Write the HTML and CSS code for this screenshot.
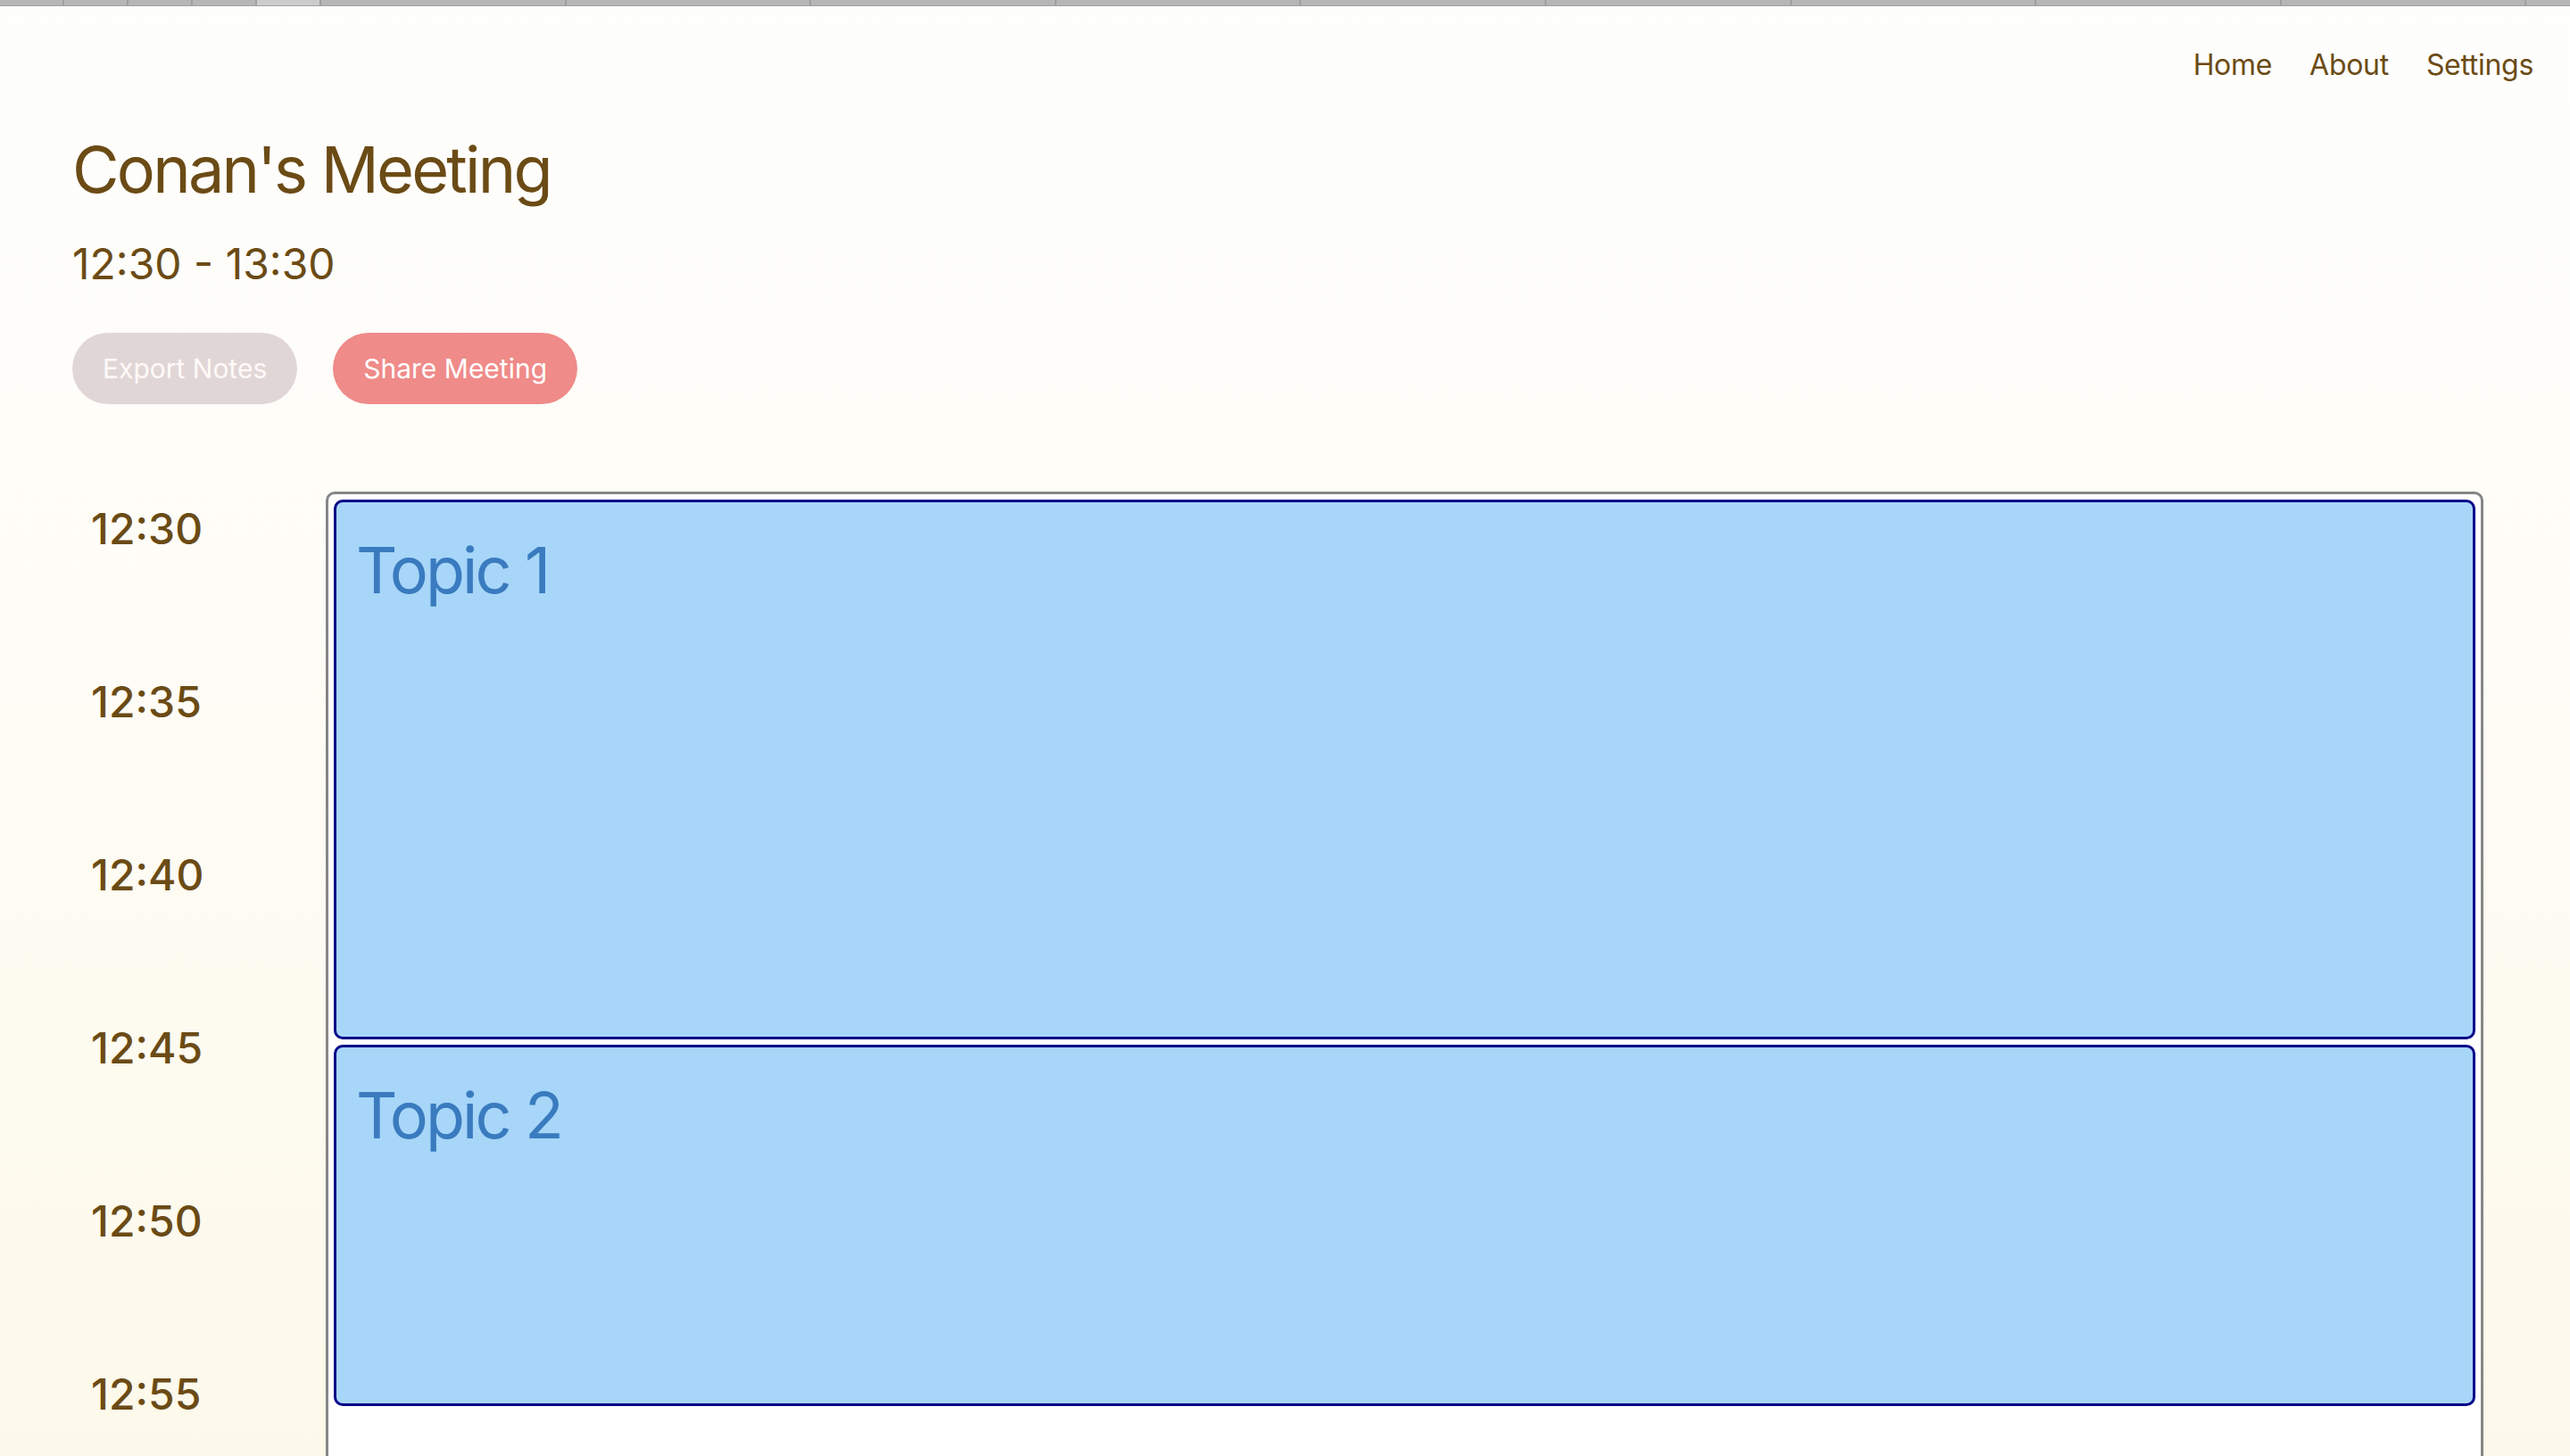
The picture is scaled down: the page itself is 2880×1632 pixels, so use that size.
FILE: index.html
```html
<!DOCTYPE html>
<html lang="en">
<head>
    <meta charset="UTF-8">
    <meta name="viewport" content="width=device-width, initial-scale=1.0">
    <title>Conan's Meeting</title>
    <link rel="stylesheet" href="styles.css">
</head>
<body>

    <!-- Tab strip at the very top -->
    <div class="tab-strip">
        <span class="tab small"></span>
        <span class="tab small"></span>
        <span class="tab small"></span>
        <span class="tab small"></span>
        <span class="tab small active"></span>
        <span class="tab"></span>
        <span class="tab"></span>
        <span class="tab"></span>
        <span class="tab"></span>
        <span class="tab"></span>
        <span class="tab"></span>
        <span class="tab"></span>
        <span class="tab"></span>
        <span class="tab"></span>
        <span class="tab last"></span>
    </div>

    <!-- Navigation -->
    <nav class="nav">
        <a href="#">Home</a>
        <a href="#">About</a>
        <a href="#">Settings</a>
    </nav>

    <!-- Meeting header -->
    <div class="meeting-header">
        <h1>Conan's Meeting</h1>
        <div class="meeting-time">12:30 - 13:30</div>
        <div class="actions">
            <button class="btn btn-export">Export Notes</button>
            <button class="btn btn-share">Share Meeting</button>
        </div>
    </div>

    <!-- Schedule -->
    <div class="schedule">
        <div class="times">
            <div class="time">12:30</div>
            <div class="time">12:35</div>
            <div class="time">12:40</div>
            <div class="time">12:45</div>
            <div class="time">12:50</div>
            <div class="time">12:55</div>
        </div>
        <div class="timeline">
            <div class="topic topic-long">Topic 1</div>
            <div class="topic topic-short">Topic 2</div>
        </div>
    </div>

</body>
</html>
```

FILE: styles.css
```css
/* General styles */
body {
    font-family: Inter, "Noto Sans", sans-serif;
    margin: 0;
    height: 100vh;
    background: linear-gradient(to bottom, #fefefd 0%, #fefcf5 50%, #fdf9ea 100%);
    color: #6b4b15;
    overflow: hidden;
}

/* Tab strip */
.tab-strip {
    display: flex;
    height: 6px;
    background-color: #b6b6b6;
    border-bottom: 1px solid #a3a3a3;
}
.tab {
    width: 272.6px;
    border-right: 2px solid #9f9f9f;
}
.tab.small {
    width: 70px;
}
.tab.active {
    background-color: #cccccc;
}
.tab.last {
    flex: 1;
    border-right: none;
}

/* Navigation */
.nav {
    display: flex;
    justify-content: flex-end;
    gap: 42px;
    padding: 46px 41px 0 0;
}
.nav a {
    font-size: 32px;
    letter-spacing: -0.3px;
    color: #6b4b15;
    text-decoration: none;
}

/* Header */
.meeting-header {
    padding: 0 81px;
}
h1 {
    font-size: 72px;
    font-weight: 400;
    letter-spacing: -2.8px;
    margin: 54px 0 0 0;
    line-height: 87px;
}
.meeting-time {
    font-size: 48px;
    line-height: 58px;
    margin-top: 34px;
}
.actions {
    display: flex;
    gap: 40px;
    margin-top: 48px;
}
.btn {
    height: 80px;
    padding: 0 34px;
    font-family: Inter, "Noto Sans", sans-serif;
    font-size: 30px;
    border: none;
    border-radius: 40px;
    color: #fffaf8;
    cursor: pointer;
}
.btn-export {
    background-color: #e1d6d6;
}
.btn-share {
    background-color: #ef8b89;
    color: #ffffff;
}

/* Schedule */
.schedule {
    display: flex;
    margin-top: 98px;
    padding: 0 97px 0 81px;
}
.times {
    width: 284px;
    padding-top: 13px;
}
.time {
    margin-bottom: 136px;
    padding-left: 21px;
    font-size: 48px;
    font-weight: 500;
    line-height: 58px;
}
.timeline {
    flex: 1;
    display: flex;
    flex-direction: column;
    gap: 6px;
    height: 1400px;
    padding: 6px;
    background-color: #ffffff;
    border: 3px solid #868686;
    border-radius: 10px;
}
.topic {
    box-sizing: border-box;
    padding: 32px 22px;
    background-color: #a7d6f9;
    border: 3px solid #000088;
    border-radius: 10px;
    color: #3a7bbf;
    font-size: 72px;
    line-height: 87px;
    letter-spacing: -3px;
}
.topic-long {
    height: 605px;
}
.topic-short {
    height: 405px;
}
```
